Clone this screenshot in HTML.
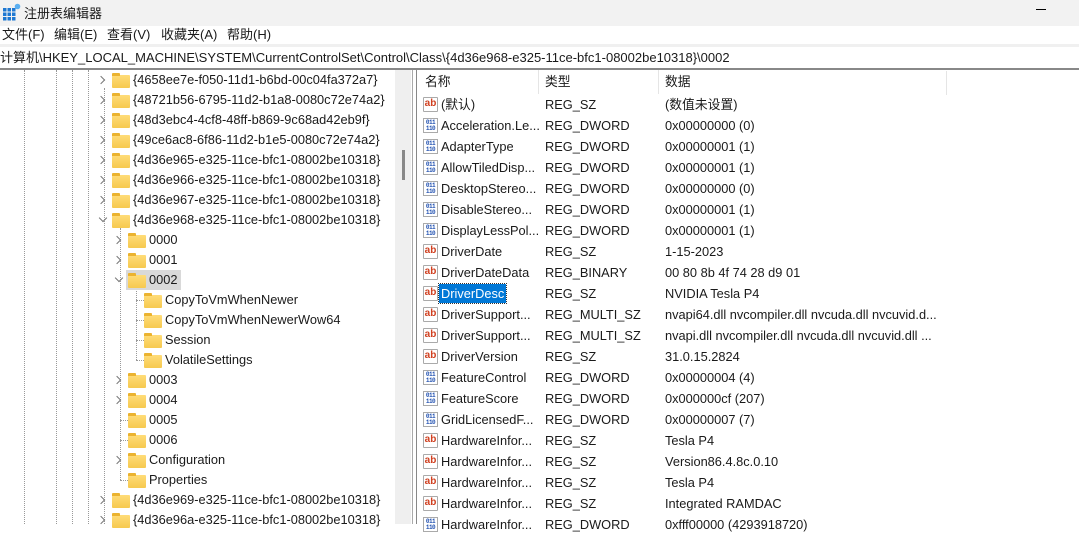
<!DOCTYPE html>
<html><head><meta charset="utf-8"><style>
*{margin:0;padding:0;box-sizing:border-box}
body{width:1079px;height:524px;overflow:hidden;background:#fff;font-family:"Liberation Sans","Noto Sans CJK SC",sans-serif;font-size:12.8px;color:#1a1a1a;position:relative}
.a{position:absolute;white-space:nowrap}
.t{position:absolute;white-space:nowrap;line-height:20px;height:20px}
.f{position:absolute;width:18px;height:13px;background:linear-gradient(#ffdc78,#f6c94f);border-radius:1px}
.f:before{content:"";position:absolute;left:0;top:-2px;width:8px;height:3px;background:#ebb330;border-radius:1px 1px 0 0}
.c{position:absolute;width:6px;height:6px;border-right:1.3px solid #777;border-bottom:1.3px solid #777;transform:rotate(-45deg)}
.cd{transform:rotate(45deg)}
.vl{position:absolute;width:0;border-left:1px dotted #999}
.hl{position:absolute;height:0;border-top:1px dotted #999}
.r{position:absolute;left:417px;height:21px;line-height:21px;width:662px}
.r span{position:absolute}
.ab{position:absolute;left:6px;top:3px;width:15px;height:15px;border:1px solid #aaa;background:#fff;border-radius:1px;font:bold 10px/12px "Liberation Sans",sans-serif;color:#d04020;text-align:center}
.bn{position:absolute;left:6px;top:3px;width:15px;height:15px;border:1px solid #aaa;background:#fff;font:bold 6px/6px "Liberation Mono",monospace;color:#2050b0;text-align:center;padding-top:1px;letter-spacing:-0.5px}
</style></head><body>
<div class="a" style="left:0;top:0;width:1079px;height:26px;background:#f2f2f2"></div>
<svg class="a" style="left:3px;top:3px" width="18" height="18"><g fill="#1e78d2"><rect x="0" y="5" width="3.5" height="3.5"/><rect x="4.5" y="5" width="3.5" height="3.5"/><rect x="9" y="5" width="3.5" height="3.5"/><rect x="0" y="9.5" width="3.5" height="3.5"/><rect x="4.5" y="9.5" width="3.5" height="3.5"/><rect x="9" y="9.5" width="3.5" height="3.5"/><rect x="0" y="14" width="3.5" height="3.5"/><rect x="4.5" y="14" width="3.5" height="3.5"/><rect x="9" y="14" width="3.5" height="3.5"/></g><circle cx="14.5" cy="3.5" r="2.8" fill="#5aaef0"/></svg>
<div class="a" style="left:24px;top:3px;font-size:13px">注册表编辑器</div>
<div class="a" style="left:1036px;top:9px;width:10px;height:1px;background:#000"></div>
<div class="a" style="left:0;top:26px;height:18px;line-height:18px;font-size:13px">
<span style="position:absolute;left:2px">文件(F)</span><span style="position:absolute;left:54px">编辑(E)</span><span style="position:absolute;left:107px">查看(V)</span><span style="position:absolute;left:161px">收藏夹(A)</span><span style="position:absolute;left:227px">帮助(H)</span></div>
<div class="a" style="left:0;top:44px;width:1079px;height:3px;background:#f0f0f0"></div>
<div class="a" style="left:0;top:49px;line-height:18px;font-size:13px">计算机\HKEY_LOCAL_MACHINE\SYSTEM\CurrentControlSet\Control\Class\{4d36e968-e325-11ce-bfc1-08002be10318}\0002</div>
<div class="a" style="left:0;top:68px;width:1079px;height:2px;background:#888"></div>

<div class="vl" style="left:24px;top:70px;height:454px"></div>
<div class="vl" style="left:56px;top:70px;height:454px"></div>
<div class="vl" style="left:72px;top:70px;height:454px"></div>
<div class="vl" style="left:88px;top:70px;height:454px"></div>
<div class="vl" style="left:104px;top:88px;height:436px"></div>
<div class="vl" style="left:120px;top:228px;height:252px"></div>
<div class="vl" style="left:136px;top:288px;height:72px"></div>
<div class="hl" style="left:136px;top:300px;width:8px"></div>
<div class="hl" style="left:136px;top:320px;width:8px"></div>
<div class="hl" style="left:136px;top:340px;width:8px"></div>
<div class="hl" style="left:136px;top:360px;width:8px"></div>
<div class="hl" style="left:120px;top:420px;width:8px"></div>
<div class="hl" style="left:120px;top:440px;width:8px"></div>
<div class="hl" style="left:120px;top:480px;width:8px"></div>

<div class="a" style="left:126px;top:270px;width:55px;height:20px;background:#d9d9d9"></div>

<div id="tree"></div>
<script>
var items=[
[1,1,"{4658ee7e-f050-11d1-b6bd-00c04fa372a7}"],
[1,1,"{48721b56-6795-11d2-b1a8-0080c72e74a2}"],
[1,1,"{48d3ebc4-4cf8-48ff-b869-9c68ad42eb9f}"],
[1,1,"{49ce6ac8-6f86-11d2-b1e5-0080c72e74a2}"],
[1,1,"{4d36e965-e325-11ce-bfc1-08002be10318}"],
[1,1,"{4d36e966-e325-11ce-bfc1-08002be10318}"],
[1,1,"{4d36e967-e325-11ce-bfc1-08002be10318}"],
[1,2,"{4d36e968-e325-11ce-bfc1-08002be10318}"],
[2,1,"0000"],[2,1,"0001"],[2,2,"0002"],
[3,0,"CopyToVmWhenNewer"],[3,0,"CopyToVmWhenNewerWow64"],[3,0,"Session"],[3,0,"VolatileSettings"],
[2,1,"0003"],[2,1,"0004"],[2,0,"0005"],[2,0,"0006"],[2,1,"Configuration"],[2,0,"Properties"],
[1,1,"{4d36e969-e325-11ce-bfc1-08002be10318}"],
[1,1,"{4d36e96a-e325-11ce-bfc1-08002be10318}"]];
var h="";
items.forEach(function(it,i){var y=70+i*20,lv=it[0],cx=104+(lv-1)*16,fx=112+(lv-1)*16;
if(it[1]==1)h+='<div class="c" style="left:'+(cx-6)+'px;top:'+(y+7)+'px"></div>';
if(it[1]==2)h+='<div class="c cd" style="left:'+(cx-4)+'px;top:'+(y+5)+'px"></div>';
h+='<div class="f" style="left:'+fx+'px;top:'+(y+5)+'px"></div>';
h+='<div class="t" style="left:'+(fx+21)+'px;top:'+y+'px">'+it[2]+'</div>';});
document.getElementById("tree").innerHTML=h;
</script>

<div class="a" style="left:395px;top:70px;width:16px;height:454px;background:#efefef"></div>
<div class="a" style="left:402px;top:150px;width:3px;height:30px;background:#888"></div>
<div class="a" style="left:412px;top:70px;width:1px;height:454px;background:#aaa"></div>
<div class="a" style="left:416px;top:70px;width:1px;height:454px;background:#888"></div>

<div class="a" style="left:425px;top:72px;line-height:20px">名称</div>
<div class="a" style="left:545px;top:72px;line-height:20px">类型</div>
<div class="a" style="left:665px;top:72px;line-height:20px">数据</div>
<div class="a" style="left:538px;top:70px;width:1px;height:24px;background:#e5e5e5"></div>
<div class="a" style="left:658px;top:70px;width:1px;height:24px;background:#e5e5e5"></div>
<div class="a" style="left:946px;top:71px;width:1px;height:24px;background:#e5e5e5"></div>
<div id="list"></div>
<script>
var rows=[
["s","(默认)","REG_SZ","(数值未设置)"],
["d","Acceleration.Le...","REG_DWORD","0x00000000 (0)"],
["d","AdapterType","REG_DWORD","0x00000001 (1)"],
["d","AllowTiledDisp...","REG_DWORD","0x00000001 (1)"],
["d","DesktopStereo...","REG_DWORD","0x00000000 (0)"],
["d","DisableStereo...","REG_DWORD","0x00000001 (1)"],
["d","DisplayLessPol...","REG_DWORD","0x00000001 (1)"],
["s","DriverDate","REG_SZ","1-15-2023"],
["s","DriverDateData","REG_BINARY","00 80 8b 4f 74 28 d9 01"],
["s","DriverDesc","REG_SZ","NVIDIA Tesla P4"],
["s","DriverSupport...","REG_MULTI_SZ","nvapi64.dll nvcompiler.dll nvcuda.dll nvcuvid.d..."],
["s","DriverSupport...","REG_MULTI_SZ","nvapi.dll nvcompiler.dll nvcuda.dll nvcuvid.dll ..."],
["s","DriverVersion","REG_SZ","31.0.15.2824"],
["d","FeatureControl","REG_DWORD","0x00000004 (4)"],
["d","FeatureScore","REG_DWORD","0x000000cf (207)"],
["d","GridLicensedF...","REG_DWORD","0x00000007 (7)"],
["s","HardwareInfor...","REG_SZ","Tesla P4"],
["s","HardwareInfor...","REG_SZ","Version86.4.8c.0.10"],
["s","HardwareInfor...","REG_SZ","Tesla P4"],
["s","HardwareInfor...","REG_SZ","Integrated RAMDAC"],
["d","HardwareInfor...","REG_DWORD","0xfff00000 (4293918720)"]];
var h="";
rows.forEach(function(r,i){var y=94+i*21;
h+='<div class="r" style="top:'+y+'px">';
h+=r[0]=="s"?'<div class="ab">ab</div>':'<div class="bn">011<br>110</div>';
if(i==9)h+='<span style="left:22px;top:1px;height:19px;line-height:19px;padding:0 2px;background:#0078d7;color:#fff;outline:1px dotted #333">'+r[1]+'</span>';
else h+='<span style="left:24px">'+r[1]+'</span>';
h+='<span style="left:128px">'+r[2]+'</span><span style="left:248px">'+r[3]+'</span></div>';});
document.getElementById("list").innerHTML=h;
</script>
</body></html>
